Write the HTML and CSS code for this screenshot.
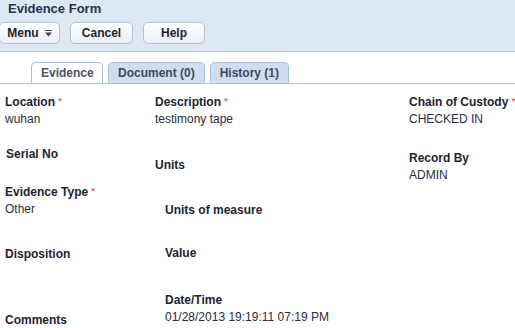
FILE: index.html
```html
<!DOCTYPE html>
<html>
<head>
  <meta charset="utf-8">
  <link rel="stylesheet" href="styles.css">
</head>
<body>
  <div class="header">
    <div class="title">Evidence Form</div>
    <div class="toolbar">
      <button class="btn btn-menu">Menu
        <svg class="menu-icon" width="7" height="7" viewBox="0 0 7 7">
          <rect x="0" y="0" width="7" height="1" fill="#444"/>
          <path d="M0 2.5 H7 L3.5 6.5 Z" fill="#444"/>
        </svg>
      </button>
      <button class="btn btn-cancel">Cancel</button>
      <button class="btn btn-help">Help</button>
    </div>
  </div>

  <div class="tabs">
    <div class="tab active">Evidence</div>
    <div class="tab">Document (0)</div>
    <div class="tab">History (1)</div>
  </div>

  <div class="form">
    <div class="col col-a">
      <div class="field">
        <div class="label">Location <span class="req">*</span></div>
        <div class="value">wuhan</div>
      </div>
      <div class="field serial">
        <div class="label">Serial No</div>
      </div>
      <div class="field ev-type">
        <div class="label">Evidence Type <span class="req">*</span></div>
        <div class="value">Other</div>
      </div>
      <div class="field disposition">
        <div class="label">Disposition</div>
      </div>
      <div class="field comments">
        <div class="label">Comments</div>
      </div>
    </div>

    <div class="col col-b">
      <div class="field">
        <div class="label">Description <span class="req">*</span></div>
        <div class="value">testimony tape</div>
      </div>
      <div class="field units">
        <div class="label">Units</div>
      </div>
      <div class="sub">
        <div class="field measure">
          <div class="label">Units of measure</div>
        </div>
        <div class="field qty">
          <div class="label">Value</div>
        </div>
        <div class="field datetime">
          <div class="label">Date/Time</div>
          <div class="value">01/28/2013 19:19:11 07:19 PM</div>
        </div>
      </div>
    </div>

    <div class="col col-c">
      <div class="field">
        <div class="label">Chain of Custody <span class="req">*</span></div>
        <div class="value">CHECKED IN</div>
      </div>
      <div class="field record">
        <div class="label">Record By</div>
        <div class="value">ADMIN</div>
      </div>
    </div>
  </div>
</body>
</html>
```

FILE: styles.css
```css
* {
  margin: 0;
  padding: 0;
  box-sizing: border-box;
}

body {
  width: 515px;
  height: 328px;
  overflow: hidden;
  background: #ffffff;
  color: #1f2330;
  font-family: "Liberation Sans", Arial, sans-serif;
  font-size: 12px;
}

.header {
  height: 52px;
  background: #dde8f5;
  border-bottom: 1px solid #a8c2df;
  padding: 1px 0 0 0;
}

.title {
  padding-left: 8px;
  font-size: 13px;
  font-weight: bold;
  line-height: 16px;
  color: #25324a;
}

.toolbar {
  display: flex;
  gap: 10px;
  margin-top: 5px;
}

.btn {
  height: 22px;
  border: 1px solid #b9c0c9;
  border-radius: 5px;
  background: linear-gradient(#ffffff, #eaeff6);
  font-family: "Liberation Sans", Arial, sans-serif;
  font-size: 12px;
  font-weight: bold;
  color: #1f2330;
  display: flex;
  align-items: center;
  justify-content: center;
}

.btn-menu {
  width: 61px;
  margin-left: -1px;
  gap: 6px;
}

.btn-cancel {
  width: 63px;
}

.btn-help {
  width: 62px;
}

.tabs {
  display: flex;
  gap: 5px;
  padding: 10px 0 0 31px;
  height: 32px;
  border-bottom: 1px solid #a8c2df;
}

.tab {
  height: 21px;
  padding: 0 9px;
  border: 1px solid #a8c2df;
  border-bottom: none;
  border-radius: 5px 5px 0 0;
  background: #d0ddee;
  font-weight: bold;
  color: #3d4a5c;
  line-height: 20px;
  white-space: nowrap;
}

.tab.active {
  background: #ffffff;
  width: 72px;
  text-align: center;
  color: #4a5566;
}

.form {
  display: flex;
  padding: 9px 0 0 5px;
}

.col-a {
  width: 150px;
  flex-shrink: 0;
}

.col-b {
  width: 254px;
  flex-shrink: 0;
}

.col-c {
  flex-shrink: 0;
}

.sub {
  padding-left: 10px;
}

.label {
  font-weight: bold;
  line-height: 17px;
  color: #1f2330;
  white-space: nowrap;
}

.value {
  line-height: 17px;
  color: #2a2d3c;
  white-space: nowrap;
}

.req {
  color: #e8603c;
  font-size: 9px;
  vertical-align: 2px;
}

.serial { margin-top: 18px; padding-left: 1px; }
.ev-type { margin-top: 20px; }
.disposition { margin-top: 28px; }
.comments { margin-top: 49px; }

.units { margin-top: 29px; }
.measure { margin-top: 28px; }
.qty { margin-top: 26px; }
.datetime { margin-top: 30px; }

.record { margin-top: 22px; }
```
